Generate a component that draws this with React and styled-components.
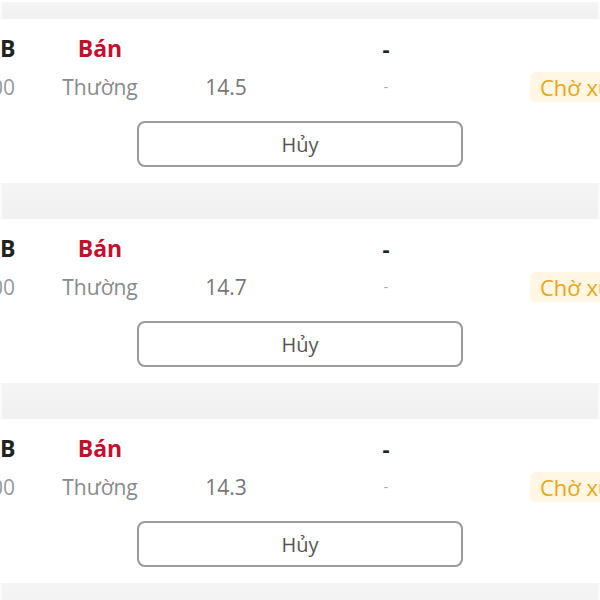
import styled, { createGlobalStyle } from "styled-components";

const GlobalStyle = createGlobalStyle`
  html, body {
    margin: 0;
    padding: 0;
    background: #ffffff;
    overflow: hidden;
  }
  body {
    font-family: "Open Sans", "Noto Sans", sans-serif;
  }
`;

const List = styled.div`
  display: flex;
  flex-direction: column;
  width: 600px;
  padding-top: 2px;
`;

const Divider = styled.div`
  height: ${(p) => p.h}px;
  background: linear-gradient(#f5f5f5, #f0f0f0);
  border-left: 2px solid #fbfbfb;
  border-right: 2px solid #fbfbfb;
`;

const Card = styled.div`
  background: #fff;
  display: flex;
  flex-direction: column;
  height: 164px;
  box-sizing: border-box;
  padding-top: 14px;
  overflow: hidden;
`;

const Grid = styled.div`
  display: grid;
  grid-template-columns: 60px 80px 172px 148px 70px max-content;
  grid-template-rows: 30px 48px;
  align-items: center;
  white-space: nowrap;
`;

const Cell = styled.div`
  text-align: ${(p) => p.align || "center"};
  font-size: ${(p) => p.size || 21}px;
  font-weight: ${(p) => (p.bold ? 700 : 400)};
  color: ${(p) => p.color || "#888"};
  margin-left: ${(p) => p.shift || 0}px;
  line-height: 1;
`;

const Badge = styled.div`
  background: #fff6e3;
  color: #eba514;
  font-size: 22px;
  line-height: 30px;
  padding: 0 10px;
  border-radius: 6px;
  font-weight: 500;
`;

const CancelButton = styled.button`
  align-self: center;
  width: 326px;
  height: 46px;
  margin-top: 10px;
  background: #fff;
  border: 2px solid #9a9a9a;
  border-radius: 8px;
  font-family: "Open Sans", "Noto Sans", sans-serif;
  font-size: 20px;
  color: #555;
  cursor: pointer;
`;

const orders = [
  { price: "14.5" },
  { price: "14.7" },
  { price: "14.3" },
];

function OrderCard({ order }) {
  return (
    <Card>
      <Grid>
        <Cell align="left" size={23} bold color="#222">B</Cell>
        <Cell size={23} bold color="#c1112f">Bán</Cell>
        <Cell />
        <Cell size={22} bold color="#222">-</Cell>
        <Cell />
        <Cell />
        <Cell align="left" color="#999" shift={-9}>00</Cell>
        <Cell color="#8a8a8a">Thường</Cell>
        <Cell color="#777">{order.price}</Cell>
        <Cell size={14} color="#aaa">-</Cell>
        <Cell />
        <Badge>Chờ xử lý</Badge>
      </Grid>
      <CancelButton>Hủy</CancelButton>
    </Card>
  );
}

export default function App() {
  return (
    <>
      <GlobalStyle />
      <List>
        <Divider h={17} />
        {orders.map((o, i) => (
          <div key={i}>
            <OrderCard order={o} />
            <Divider h={36} />
          </div>
        ))}
      </List>
    </>
  );
}
